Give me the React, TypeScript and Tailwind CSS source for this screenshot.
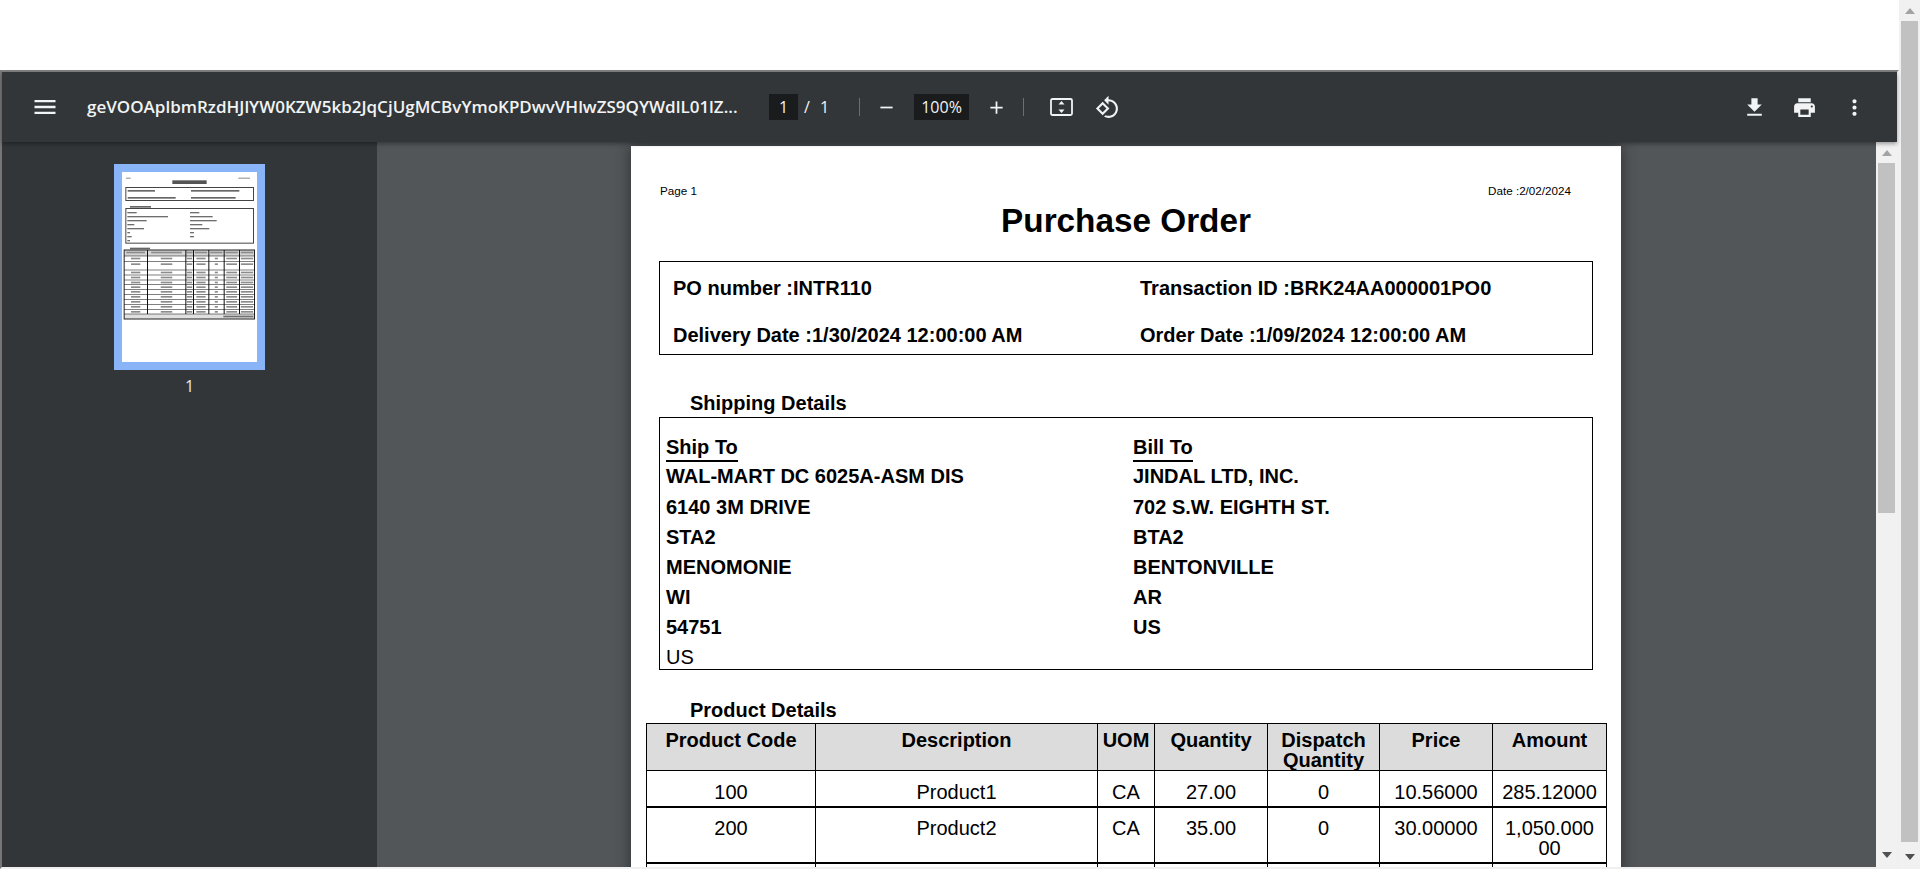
import type { ReactNode } from 'react';

const shipLines = [
  ['WAL-MART DC 6025A-ASM DIS', 'JINDAL LTD, INC.'],
  ['6140 3M DRIVE', '702 S.W. EIGHTH ST.'],
  ['STA2', 'BTA2'],
  ['MENOMONIE', 'BENTONVILLE'],
  ['WI', 'AR'],
  ['54751', 'US'],
];

const thumbColumns = [172, 287, 310, 356, 402, 448];
const thumbTextWidths = [0.4, 0.3, 0.7, 0.6, 0.2, 0.7, 0.8];
const thumbRows = [318, 335, 360, 375, 390, 404, 418, 433, 448, 463, 478, 492];
const thumbLines = [
  [200, 234, 368],
  [212, 170, 380],
  [224, 133, 337],
  [236, 162, 358],
  [248, 120, 312],
  [260, 125, 312],
];

function ToolIcon({ size, path, className }: { size: number; path: string; className?: string }) {
  return (
    <svg width={size} height={size} viewBox="0 0 24 24" fill="currentColor" className={className}>
      <path d={path} />
    </svg>
  );
}

function Separator({ className }: { className: string }) {
  return <div className={`w-px h-[18px] bg-[#6c6f72] ${className}`} />;
}

function Arrow({ up, color }: { up?: boolean; color: string }) {
  return (
    <svg width="10" height="6" viewBox="0 0 10 6" fill={color}>
      <path d={up ? 'M5 0l5 6H0z' : 'M0 0h10L5 6z'} />
    </svg>
  );
}

function Scrollbar({ thumbHeight }: { thumbHeight: string }) {
  return (
    <div className="flex flex-col items-center h-full w-[21px] bg-[#f1f1f1] shrink-0">
      <div className="flex items-center justify-center w-full h-[21px]">
        <Arrow up color="#a3a3a3" />
      </div>
      <div className={`w-[17px] bg-[#c1c1c1] ${thumbHeight}`} />
      <div className="flex-1 flex items-end justify-center w-full pb-[9px]">
        <Arrow color="#505050" />
      </div>
    </div>
  );
}

function Thumbnail() {
  return (
    <div className="w-[135px] h-[190px] bg-white overflow-hidden">
      <svg width="135" height="190" viewBox="96 66 405 570" className="block blur-[0.4px]">
        <g fill="#8a8a8a">
          <rect x="108" y="83" width="14" height="3" />
          <rect x="445" y="83" width="35" height="3" />
        </g>
        <rect x="247" y="91" width="103" height="11" fill="#555" />
        <rect x="107.500" y="112.500" width="383" height="39" fill="none" stroke="#444" strokeWidth="3" />
        <g fill="#666">
          <rect x="113" y="120" width="82" height="5" />
          <rect x="303" y="120" width="145" height="5" />
          <rect x="113" y="141" width="144" height="5" />
          <rect x="303" y="141" width="134" height="5" />
          <rect x="120" y="168" width="63" height="5" />
          <rect x="120" y="293" width="60" height="5" />
        </g>
        <rect x="107.500" y="175.500" width="383" height="104" fill="none" stroke="#444" strokeWidth="3" />
        <g fill="#6e6e6e">
          <rect x="112" y="186" width="28" height="4" />
          <rect x="300" y="186" width="28" height="4" />
          {thumbLines.map(([y, left, right]) => (
            <g key={y}>
              <rect x="112" y={y - 2} width={left - 112} height="4" />
              <rect x="300" y={y - 2} width={right - 300} height="4" />
            </g>
          ))}
          <rect x="112" y="270" width="8" height="4" />
        </g>
        <rect x="103" y="300" width="390" height="18" fill="#d4d4d4" />
        <rect x="103" y="492" width="390" height="15" fill="#e0e0e0" />
        <rect x="400" y="497" width="90" height="5" fill="#707070" />
        <g fill="#8c8c8c">
          {[102, ...thumbColumns].map((x, i) => {
            const next = [...thumbColumns, 494][i];
            const rows = [300, ...thumbRows.slice(0, -1)];
            return rows.map((y) => {
              const w = (next - x) * (y === 300 ? 0.8 : thumbTextWidths[i]);
              return <rect key={`${x}-${y}`} x={(x + next - w) / 2} y={y + 5} width={w} height="5" />;
            });
          })}
        </g>
        <rect x="102.500" y="300" width="391" height="207" fill="none" stroke="#222" strokeWidth="3" />
        <g fill="#111">
          {thumbColumns.map((x) => (
            <rect key={x} x={x - 1} y="300" width="3" height="192" />
          ))}
          {thumbRows.map((y) => (
            <rect key={y} x="102" y={y - 1} width="392" height="2" opacity="0.8" />
          ))}
        </g>
      </svg>
    </div>
  );
}

function HeadCell({ children }: { children: ReactNode }) {
  return <th className="border border-black bg-[#dcdcdc] align-top pt-[6px] px-0 font-bold leading-[20px]">{children}</th>;
}

function Cell({ children, top = 'pt-[11px]' }: { children?: ReactNode; top?: string }) {
  return <td className={`border border-black align-top text-center pb-[2px] leading-[20px] ${top}`}>{children}</td>;
}

function PdfPage() {
  return (
    <div className="w-[990px] h-[1400px] ml-[254px] mt-[4px] pt-[37px] bg-white text-black font-['Liberation_Sans',Arial,sans-serif] text-[20px] shadow-[0_0_14px_rgba(0,0,0,0.45)] shrink-0">
      <div className="flex justify-between ml-[29px] mr-[50px] text-[11.67px] leading-[16px]">
        <span>Page 1</span>
        <span>Date :2/02/2024</span>
      </div>
      <h1 className="mt-[3px] text-center text-[33.3px] leading-[38px] font-bold">Purchase Order</h1>

      {/* Order summary */}
      <div className="mt-[21px] ml-[28px] w-[934px] h-[94px] border border-black grid grid-cols-2 gap-y-[23px] content-start pt-[14px] font-bold leading-[24px]">
        <div className="pl-[13px]">PO number :INTR110</div>
        <div className="pl-[14px]">Transaction ID :BRK24AA000001PO0</div>
        <div className="pl-[13px]">Delivery Date :1/30/2024 12:00:00 AM</div>
        <div className="pl-[14px]">Order Date :1/09/2024 12:00:00 AM</div>
      </div>

      {/* Shipping */}
      <div className="mt-[36px] mb-[2px] ml-[59px] font-bold leading-[24px]">Shipping Details</div>
      <div className="ml-[28px] w-[934px] h-[253px] border border-black pt-[14px] leading-[30px]">
        <div className="grid grid-cols-2 h-[29px] font-bold">
          <div className="pl-[6px]">
            <span className="inline-block h-[30px] border-b-2 border-black">Ship To</span>
          </div>
          <div className="pl-[7px]">
            <span className="inline-block h-[30px] border-b-2 border-black">Bill To</span>
          </div>
        </div>
        {shipLines.map(([ship, bill], i) => (
          <div key={ship} className={`grid grid-cols-2 font-bold ${i === 0 ? 'h-[31px]' : 'h-[30px]'}`}>
            <div className="pl-[6px]">{ship}</div>
            <div className="pl-[7px]">{bill}</div>
          </div>
        ))}
        <div className="h-[30px] pl-[6px]">US</div>
      </div>

      {/* Products */}
      <div className="mt-[28px] mb-[1px] ml-[59px] font-bold leading-[24px]">Product Details</div>
      <table className="ml-[15px] w-[960px] table-fixed border-collapse">
        <colgroup>
          <col className="w-[169px]" />
          <col className="w-[282px]" />
          <col className="w-[57px]" />
          <col className="w-[113px]" />
          <col className="w-[112px]" />
          <col className="w-[113px]" />
          <col className="w-[114px]" />
        </colgroup>
        <thead>
          <tr className="h-[46px]">
            <HeadCell>Product Code</HeadCell>
            <HeadCell>Description</HeadCell>
            <HeadCell>UOM</HeadCell>
            <HeadCell>Quantity</HeadCell>
            <HeadCell>Dispatch Quantity</HeadCell>
            <HeadCell>Price</HeadCell>
            <HeadCell>Amount</HeadCell>
          </tr>
        </thead>
        <tbody>
          <tr className="h-[36px] border-b-2 border-black">
            <Cell>100</Cell>
            <Cell>Product1</Cell>
            <Cell>CA</Cell>
            <Cell>27.00</Cell>
            <Cell>0</Cell>
            <Cell>10.56000</Cell>
            <Cell>285.12000</Cell>
          </tr>
          <tr className="h-[56px] border-b-2 border-black">
            <Cell top="pt-[10px]">200</Cell>
            <Cell top="pt-[10px]">Product2</Cell>
            <Cell top="pt-[10px]">CA</Cell>
            <Cell top="pt-[10px]">35.00</Cell>
            <Cell top="pt-[10px]">0</Cell>
            <Cell top="pt-[10px]">30.00000</Cell>
            <Cell top="pt-[10px]">
              1,050.000
              <br />
              00
            </Cell>
          </tr>
          <tr className="h-[37px]">
            <Cell />
            <Cell />
            <Cell />
            <Cell />
            <Cell />
            <Cell />
            <Cell />
          </tr>
        </tbody>
      </table>
    </div>
  );
}

function Toolbar() {
  return (
    <div className="relative z-10 flex items-center h-[70px] shrink-0 bg-[#323639] text-[#f1f3f4] font-['Open_Sans',sans-serif] shadow-[0_2px_4px_rgba(0,0,0,0.35)]">
      <ToolIcon size={28} className="ml-[29px]" path="M3 18h18v-2H3v2zm0-5h18v-2H3v2zm0-7v2h18V6H3z" />
      <div className="ml-[28px] w-[650px] whitespace-nowrap text-[17px] font-semibold">
        geVOOAplbmRzdHJlYW0KZW5kb2JqCjUgMCBvYmoKPDwvVHlwZS9QYWdlL01lZ...
      </div>
      <div className="ml-[32px] flex items-center justify-center w-[29px] h-[26px] bg-[#191b1c] text-[16px]">1</div>
      <span className="ml-[6px] text-[16px]">/</span>
      <span className="ml-[10px] text-[16px]">1</span>
      <Separator className="ml-[30px]" />
      <ToolIcon size={21} className="ml-[16px]" path="M19 13H5v-2h14v2z" />
      <div className="ml-[17px] flex items-center justify-center w-[55px] h-[26px] bg-[#191b1c] text-[16px]">100%</div>
      <ToolIcon size={21} className="ml-[17px]" path="M19 13h-6v6h-2v-6H5v-2h6V5h2v6h6v2z" />
      <Separator className="ml-[16px]" />
      {/* fit to page */}
      <svg width="23" height="18" viewBox="0 0 23 18" fill="none" className="ml-[26px]">
        <rect x="1" y="1" width="21" height="16" rx="1.500" stroke="currentColor" strokeWidth="1.800" />
        <path d="M11.500 3l3 3.500h-6zM11.500 15l-3-3.500h6z" fill="currentColor" />
      </svg>
      <ToolIcon
        size={25}
        className="ml-[22px]"
        path="M7.34 6.41L.86 12.9l6.49 6.48 6.49-6.48-6.5-6.49zM3.69 12.9l3.66-3.66L11 12.9l-3.66 3.66-3.65-3.66zm15.67-6.26C17.61 4.88 15.3 4 13 4V.76L8.76 5 13 9.24V6c1.79 0 3.58.68 4.95 2.05 2.73 2.73 2.73 7.17 0 9.9C16.58 19.32 14.79 20 13 20c-.97 0-1.94-.21-2.84-.61l-1.49 1.49C10.02 21.62 11.51 22 13 22c2.3 0 4.61-.88 6.36-2.64 3.52-3.51 3.52-9.21 0-12.72z"
      />
      <div className="ml-auto flex items-center mr-[30px]">
        <ToolIcon size={25} path="M19 9h-4V3H9v6H5l7 7 7-7zM5 18v2h14v-2H5z" />
        <ToolIcon
          size={25}
          className="ml-[25px]"
          path="M19 8H5c-1.660 0-3 1.340-3 3v6h4v4h12v-4h4v-6c0-1.660-1.340-3-3-3zm-3 11H8v-5h8v5zm3-7c-.55 0-1-.45-1-1s.45-1 1-1 1 .45 1 1-.45 1-1 1zm-1-9H6v4h12V3z"
        />
        <ToolIcon
          size={25}
          className="ml-[25px]"
          path="M12 8c1.100 0 2-.9 2-2s-.9-2-2-2-2 .9-2 2 .9 2 2 2zm0 2c-1.100 0-2 .9-2 2s.9 2 2 2 2-.9 2-2-.9-2-2-2zm0 6c-1.100 0-2 .9-2 2s.9 2 2 2 2-.9 2-2-.9-2-2-2z"
        />
      </div>
    </div>
  );
}

export default function App() {
  return (
    <div className="flex h-[869px] w-full overflow-hidden bg-white">
      <div className="flex-1 min-w-0 flex flex-col">
        <div className="h-[70px] shrink-0" />
        <div className="flex-1 min-h-0 flex flex-col border-t-2 border-l-2 border-t-[#808080] border-l-[#767676] border-r-2 border-r-[#f0f0f0] border-b-2 border-b-[#f0f0f0]">
          <Toolbar />
          <div className="flex-1 min-h-0 flex">
            {/* Thumbnails */}
            <div className="w-[375px] shrink-0 bg-[#323639] pt-[22px] font-['Open_Sans',sans-serif]">
              <div className="ml-[112px] w-[151px] p-[8px] bg-[#8ab4f8]">
                <Thumbnail />
              </div>
              <div className="mt-[6px] ml-[112px] w-[151px] text-center text-[16px] leading-[20px] text-[#e8eaed]">1</div>
            </div>
            <div className="flex-1 min-w-0 overflow-hidden bg-[#525659]">
              <PdfPage />
            </div>
            <Scrollbar thumbHeight="h-[350px]" />
          </div>
        </div>
      </div>
      <Scrollbar thumbHeight="h-[821px]" />
    </div>
  );
}
